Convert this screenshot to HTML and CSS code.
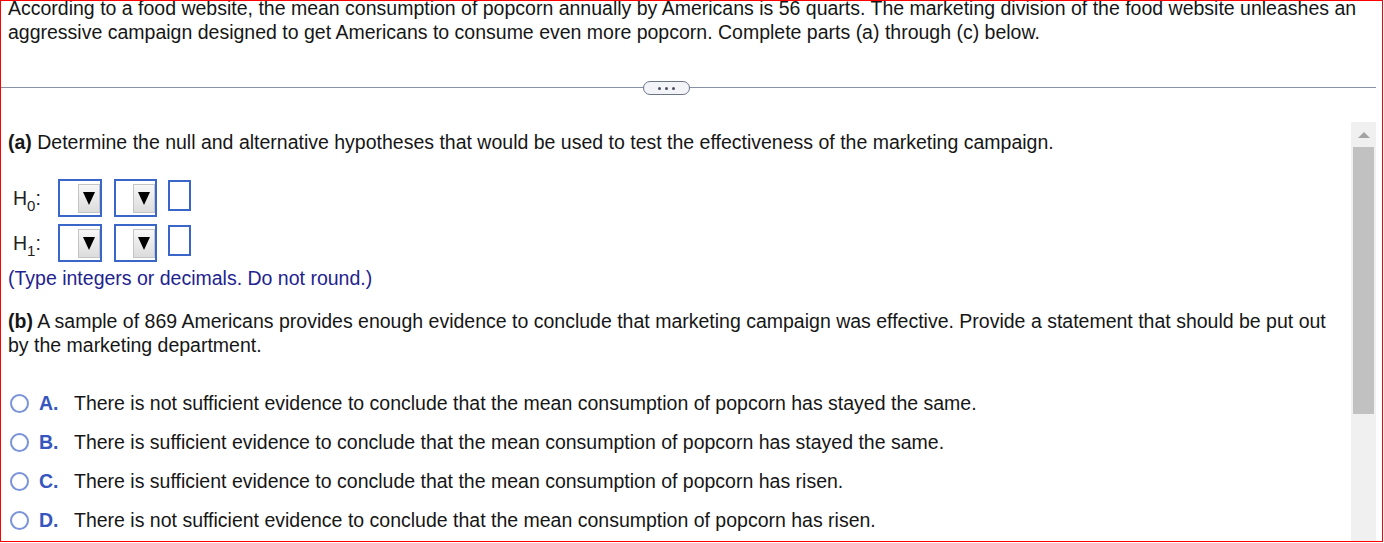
FILE: index.html
```html
<!DOCTYPE html>
<html lang="en">
<head>
    <meta charset="UTF-8">
    <title>Hypothesis Test - Popcorn</title>
    <link rel="stylesheet" href="styles.css">
</head>
<body>
    <div class="frame">
        <div class="inner">
            <p class="intro">
                According to a food website, the mean consumption of popcorn annually by Americans is 56 quarts. The marketing division of the food website unleashes an
                aggressive campaign designed to get Americans to consume even more popcorn. Complete parts (a) through (c) below.
            </p>

            <div class="divider">
                <span class="pill"><i></i><i></i><i></i></span>
            </div>

            <div class="panel">
                <div class="content">
                    <p class="part-a"><b>(a)</b> Determine the null and alternative hypotheses that would be used to test the effectiveness of the marketing campaign.</p>

                    <div class="hyp-row">
                        <span class="hyp-label">H<sub>0</sub>:</span>
                        <span class="select"><span class="select-btn"><span class="tri"></span></span></span>
                        <span class="select"><span class="select-btn"><span class="tri"></span></span></span>
                        <span class="answer"></span>
                    </div>
                    <div class="hyp-row">
                        <span class="hyp-label">H<sub>1</sub>:</span>
                        <span class="select"><span class="select-btn"><span class="tri"></span></span></span>
                        <span class="select"><span class="select-btn"><span class="tri"></span></span></span>
                        <span class="answer"></span>
                    </div>
                    <p class="hint">(Type integers or decimals. Do not round.)</p>

                    <p class="part-b"><b>(b)</b> A sample of 869 Americans provides enough evidence to conclude that marketing campaign was effective. Provide a statement that should be put out by the marketing department.</p>

                    <ul class="choices">
                        <li><span class="radio"></span><span class="letter">A.</span>There is not sufficient evidence to conclude that the mean consumption of popcorn has stayed the same.</li>
                        <li><span class="radio"></span><span class="letter">B.</span>There is sufficient evidence to conclude that the mean consumption of popcorn has stayed the same.</li>
                        <li><span class="radio"></span><span class="letter">C.</span>There is sufficient evidence to conclude that the mean consumption of popcorn has risen.</li>
                        <li><span class="radio"></span><span class="letter">D.</span>There is not sufficient evidence to conclude that the mean consumption of popcorn has risen.</li>
                    </ul>
                </div>
                <div class="scrollbar">
                    <span class="arrow-up"></span>
                    <span class="thumb"></span>
                </div>
            </div>
        </div>
    </div>
</body>
</html>
```

FILE: styles.css
```css
html, body {
    margin: 0;
    padding: 0;
    background: #fff;
    overflow: hidden;
}
body {
    font-family: "Liberation Sans", Arial, sans-serif;
    font-size: 19.5px;
    color: #161616;
}
.frame {
    width: 1383px;
    height: 542px;
    box-sizing: border-box;
    border: 1px solid #f00;
    overflow: hidden;
}
.inner {
    margin-top: -5px;
    padding-right: 6px;
}
.intro {
    margin: 0;
    padding: 0 8px 0 7px;
    line-height: 24px;
}
.divider {
    position: relative;
    height: 14px;
    margin-top: 37px;
    padding-right: 44px;
    display: flex;
    justify-content: center;
    align-items: center;
}
.divider::before {
    content: "";
    position: absolute;
    left: 0;
    right: 0;
    top: 6px;
    border-top: 1px solid #8792a6;
}
.pill {
    position: relative;
    width: 45px;
    height: 12px;
    border: 1px solid #6b7588;
    border-radius: 8px;
    background: #f3f4f7;
    display: flex;
    justify-content: center;
    align-items: center;
    gap: 4px;
}
.pill i {
    width: 3px;
    height: 3px;
    border-radius: 50%;
    background: #4a5060;
}
.panel {
    display: flex;
    margin-top: 27px;
    height: 420px;
}
.content {
    flex: 1;
    padding: 8px 0 0 7px;
}
.part-a {
    margin: 0;
    line-height: 24px;
}
.hyp-row {
    display: flex;
    align-items: center;
    gap: 12px;
    height: 38px;
    margin-top: 7px;
}
.part-a + .hyp-row {
    margin-top: 25px;
}
.hyp-label {
    width: 33px;
    padding-left: 5px;
    color: #222;
}
.hyp-label sub {
    font-size: 15px;
    vertical-align: -6px;
    line-height: 0;
}
.select {
    width: 44px;
    height: 38px;
    box-sizing: border-box;
    border: 2px solid #3b66c9;
    display: flex;
    justify-content: flex-end;
    align-items: center;
}
.select + .select {
    width: 43px;
}
.select-btn {
    width: 22px;
    height: 29px;
    box-sizing: border-box;
    border: 1px solid #c4c4c4;
    background: linear-gradient(#f7f7f7, #dcdcdc);
    display: flex;
    justify-content: center;
    align-items: center;
}
.tri {
    width: 0;
    height: 0;
    border-left: 6px solid transparent;
    border-right: 6px solid transparent;
    border-top: 13px solid #000;
}
.answer {
    width: 23px;
    height: 31px;
    box-sizing: border-box;
    border: 2px solid #3b66c9;
    margin-left: -1px;
    align-self: flex-start;
    margin-top: 1px;
}
.hint {
    margin: 4px 0 0;
    line-height: 24px;
    color: #23238f;
}
.part-b {
    margin: 19px 0 0;
    line-height: 24px;
    padding-right: 14px;
}
.choices {
    list-style: none;
    margin: 34px 0 0;
    padding: 0;
}
.choices li {
    display: flex;
    align-items: center;
    height: 24px;
    line-height: 24px;
    margin-bottom: 15px;
}
.radio {
    width: 19px;
    height: 19px;
    box-sizing: border-box;
    border: 2px solid #7b93d8;
    border-radius: 50%;
    margin: 0 10px 0 2px;
}
.letter {
    width: 35px;
    font-weight: bold;
    color: #3656be;
}
.scrollbar {
    width: 25px;
    background: #f0f0f0;
    display: flex;
    flex-direction: column;
    align-items: center;
}
.arrow-up {
    margin-top: 10px;
    width: 0;
    height: 0;
    border-left: 6px solid transparent;
    border-right: 6px solid transparent;
    border-bottom: 6px solid #a3a3a3;
}
.thumb {
    margin-top: 9px;
    width: 21px;
    height: 267px;
    background: #c1c1c1;
}
```
